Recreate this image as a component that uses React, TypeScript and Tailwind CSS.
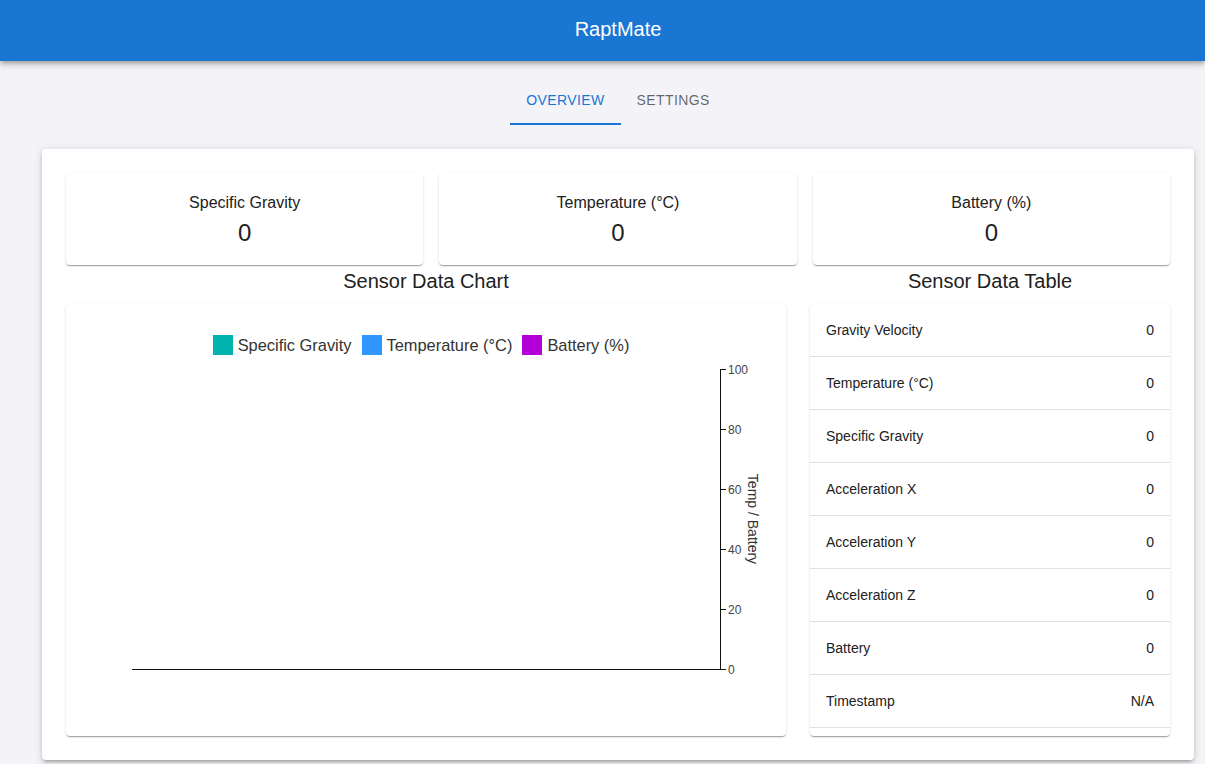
const STATS = [
  { label: 'Specific Gravity', value: '0' },
  { label: 'Temperature (°C)', value: '0' },
  { label: 'Battery (%)', value: '0' },
];

const ROWS = [
  ['Gravity Velocity', '0'],
  ['Temperature (°C)', '0'],
  ['Specific Gravity', '0'],
  ['Acceleration X', '0'],
  ['Acceleration Y', '0'],
  ['Acceleration Z', '0'],
  ['Battery', '0'],
  ['Timestamp', 'N/A'],
];

const LEGEND = [
  { label: 'Specific Gravity', color: 'bg-[#00b3ad]' },
  { label: 'Temperature (°C)', color: 'bg-[#3197ff]' },
  { label: 'Battery (%)', color: 'bg-[#b300d9]' },
];

const paper =
  'bg-white rounded-[4px] shadow-[0_2px_1px_-1px_rgba(0,0,0,0.2),0_1px_1px_0_rgba(0,0,0,0.14),0_1px_3px_0_rgba(0,0,0,0.12)]';

function Chart() {
  const ticks = [100, 80, 60, 40, 20, 0];
  return (
    <svg width="720" height="381" className="block">
      <line x1="66" y1="314.5" x2="654" y2="314.5" stroke="#111" strokeWidth="1" />
      <line x1="654.5" y1="14" x2="654.5" y2="315" stroke="#111" strokeWidth="1" />
      {ticks.map((t, i) => {
        const y = 14.5 + i * 60;
        return (
          <g key={t}>
            <line x1="654" y1={y} x2="660" y2={y} stroke="#111" strokeWidth="1" />
            <text
              x="662"
              y={y + 4}
              fontSize="12"
              fill="#444"
              fontFamily="'Liberation Sans', Arial, sans-serif"
            >
              {t}
            </text>
          </g>
        );
      })}
      <text
        x="686"
        y="164"
        fontSize="14"
        fill="#333"
        textAnchor="middle"
        transform="rotate(90 686 164)"
        dominantBaseline="middle"
        fontFamily="'Liberation Sans', Arial, sans-serif"
      >
        Temp / Battery
      </text>
    </svg>
  );
}

export default function App() {
  return (
    <div className="min-h-screen bg-[#f4f4f8] text-[#212121] font-['Liberation_Sans','Helvetica','Arial',sans-serif]">
      <header className="h-[61px] bg-[#1976d2] text-white flex items-center justify-center pl-[31px] shadow-[0_2px_4px_-1px_rgba(0,0,0,0.2),0_4px_5px_0_rgba(0,0,0,0.14),0_1px_10px_0_rgba(0,0,0,0.12)] relative z-10">
        <h1 className="text-[20px] leading-none -mt-[3px]">RaptMate</h1>
      </header>

      <main className="pl-[42px] pr-[11px]">
        <nav className="mt-4 flex justify-center">
          <button className="relative h-12 px-4 pb-[2px] min-w-[90px] text-[14px] uppercase tracking-[0.4px] text-[#1976d2]">
            Overview
            <span className="absolute left-0 right-0 bottom-0 h-[2px] bg-[#1976d2]" />
          </button>
          <button className="h-12 px-4 pb-[2px] min-w-[90px] text-[14px] uppercase tracking-[0.4px] text-black/60">
            Settings
          </button>
        </nav>

        <section className={`mt-6 p-6 ${paper} shadow-[0_3px_3px_-2px_rgba(0,0,0,0.2),0_3px_4px_0_rgba(0,0,0,0.14),0_1px_8px_0_rgba(0,0,0,0.12)]`}>
          <div className="grid grid-cols-3 gap-4">
            {STATS.map((s) => (
              <div key={s.label} className={`${paper} pt-4 pb-4 text-center`}>
                <p className="text-[16px] leading-6 mt-[2px]">{s.label}</p>
                <p className="mt-[2px] text-[24px] leading-8">{s.value}</p>
              </div>
            ))}
          </div>

          <div className="grid grid-cols-[2fr_1fr] gap-6">
            <div>
              <h2 className="text-[20px] leading-8 text-center mb-[7px]">Sensor Data Chart</h2>
              <div className={`${paper} h-[432px] flex flex-col`}>
                <div className="mt-[31px] h-5 flex justify-center items-center gap-[10px] pr-[10px] text-[16.4px] text-[#333]">
                  {LEGEND.map((l) => (
                    <div key={l.label} className="flex items-center gap-[5px]">
                      <span className={`w-5 h-5 ${l.color}`} />
                      <span className="leading-5">{l.label}</span>
                    </div>
                  ))}
                </div>
                <Chart />
              </div>
            </div>

            <div>
              <h2 className="text-[20px] leading-8 text-center mb-[7px]">Sensor Data Table</h2>
              <div className={`${paper} h-[432px] overflow-hidden`}>
                {ROWS.map(([k, v]) => (
                  <div
                    key={k}
                    className="flex justify-between items-center px-4 py-4 border-b border-[#e0e0e0] text-[14px] leading-5"
                  >
                    <span>{k}</span>
                    <span>{v}</span>
                  </div>
                ))}
              </div>
            </div>
          </div>
        </section>
      </main>
    </div>
  );
}
